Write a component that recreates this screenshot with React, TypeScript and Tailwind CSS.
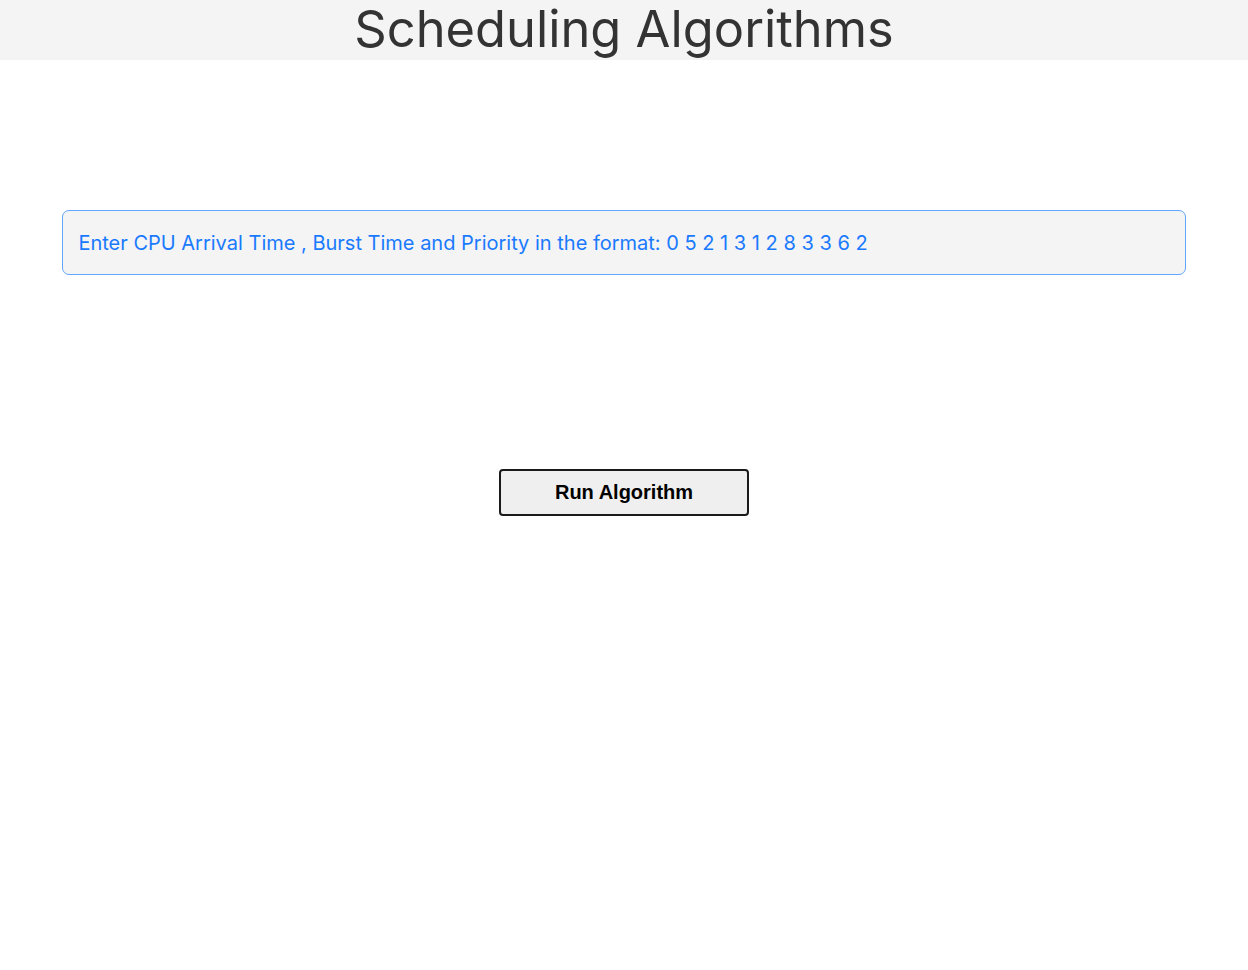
export default function App() {
  return (
    <div className="min-h-screen bg-white font-['Inter',sans-serif]">
      <header className="flex h-[60px] items-center justify-center bg-[#f4f4f4] pb-[2px]">
        <h1 className="text-[50.6px] leading-none text-[#333333]">Scheduling Algorithms</h1>
      </header>

      <div className="flex justify-center pt-[150px]">
        <input
          type="text"
          placeholder="Enter CPU Arrival Time , Burst Time and Priority in the format: 0 5 2 1 3 1 2 8 3 3 6 2"
          className="h-[65px] w-[90%] rounded-[7px] border border-[#5ea6ff] bg-[#f4f4f4] pl-[15px] pr-4 text-[20px] text-[#1a7aff] outline-none placeholder:text-[#1a7aff]"
        />
      </div>

      <div className="flex justify-center pt-[194px]">
        <button className="h-[47px] w-[250px] rounded-[4px] border-2 border-[#1a1a1a] bg-[#efefef] pb-[2px] font-['Liberation_Sans',Arial,sans-serif] text-[20px] font-bold text-black">
          Run Algorithm
        </button>
      </div>
    </div>
  );
}
